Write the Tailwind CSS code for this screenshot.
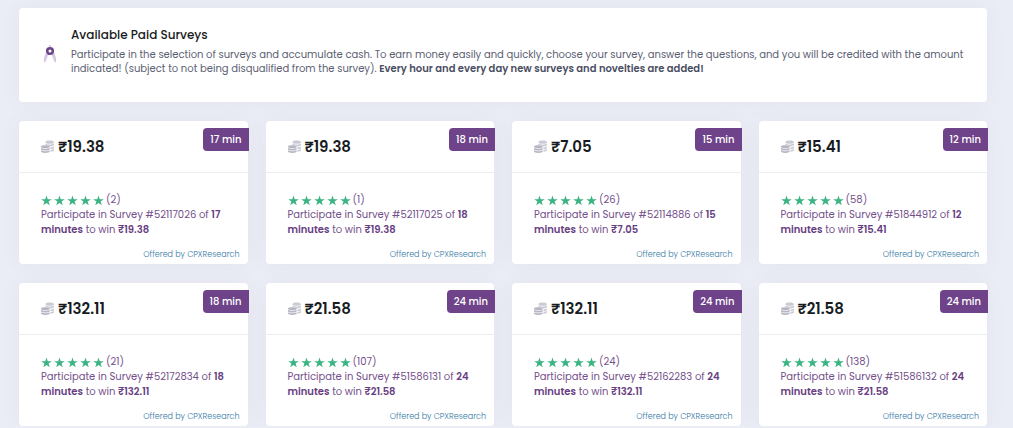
<!DOCTYPE html>
<html lang="en">
<head>
    <meta charset="UTF-8">
    <meta name="viewport" content="width=device-width, initial-scale=1.0">
    <title>Available Paid Surveys</title>

    <!-- Tailwind CSS -->
    <script src="https://cdn.jsdelivr.net/npm/@tailwindcss/browser@4"></script>
</head>
<body class="bg-[#ebedf6] font-[Poppins,Inter,sans-serif] text-[10px] leading-[14px]">
    <!-- Icon sprites -->
    <svg class="hidden">
        <symbol id="coins" viewBox="0 0 24 24">
            <g fill="#b5b5c3">
                <path opacity=".7" d="M8 3.500C9.500 1.800 12 1 16 1c4.500 0 8 1.200 8 3s-3.500 3-8 3C12 7 8 6 8 3.500zM8 6.500C10 8 13 8.500 16 8.500c3.500 0 6-.6 8-2v2.300c0 1.700-3 3-7.500 3C15 10 12 9 8 9zM17.500 13.300c3 0 5-.6 6.500-1.500v2.400c0 1.400-2.500 2.500-6.500 2.800zM17.500 18.500c3-.2 5-.8 6.500-1.700V19c0 1.400-2.500 2.500-6.500 2.800z"/>
                <ellipse cx="8" cy="12.500" rx="8" ry="2.600"/>
                <path d="M0 14.500c2 1.300 5 1.800 8 1.800s6-.5 8-1.800V17c0 1.500-3.600 2.600-8 2.600S0 18.500 0 17zM0 19c2 1.300 5 1.800 8 1.800s6-.5 8-1.800v2.200c0 1.500-3.600 2.600-8 2.600s-8-1.100-8-2.600z"/>
            </g>
        </symbol>
        <symbol id="star" viewBox="0 0 24 24">
            <path fill="#3bb383" d="M12 1l2.700 8.200H23.500l-7 5.100 2.600 8.300L12 17.500l-7.100 5.100 2.600-8.300-7-5.100h8.800z"/>
        </symbol>
    </svg>

    <main class="pt-2 pl-[19px] pr-[26px]">
        <!-- Intro -->
        <section class="flex items-start rounded bg-white pt-[18px] pb-[26px] pl-[23px] pr-4 shadow-[0_0_20px_rgba(82,63,105,0.06)]">
            <svg class="mt-[19px] h-[18px] w-4 shrink-0" viewBox="0 0 16 18">
                <path fill="#d6c8e0" d="M7.200 0h1.600v2.500H7.200zM4 7.500l2.600 2c-1.500 2.300-1.900 4.700-2.700 6.700L2 17.800C1.400 14 2.400 10.600 4 7.500zM12 7.500l-2.600 2c1.500 2.300 1.900 4.700 2.700 6.700l1.900 1.600c.6-3.800-.4-7.200-2-10.300z"/>
                <circle cx="8" cy="6" r="2.800" fill="#fff" stroke="#6d4588" stroke-width="2.600"/>
            </svg>
            <div class="ml-[13px]">
                <h1 class="mb-1 text-[12px] leading-[18px] font-medium text-[#181c22]">Available Paid Surveys</h1>
                <p class="text-[#5a6072]">Participate in the selection of surveys and accumulate cash. To earn money easily and quickly, choose your survey, answer the questions, and you will be credited with the amount indicated! (subject to not being disqualified from the survey). <b class="font-semibold text-[#4a4e63]">Every hour and every day new surveys and novelties are added!</b></p>
            </div>
        </section>

        <!-- Survey cards -->
        <section id="surveys" class="mt-[19px] grid grid-cols-4 gap-x-[18px] gap-y-[19px]"></section>
    </main>

    <script>
        const surveys = [
            { id: 52117026, reward: '19.38', minutes: 17, votes: 2 },
            { id: 52117025, reward: '19.38', minutes: 18, votes: 1 },
            { id: 52114886, reward: '7.05', minutes: 15, votes: 26 },
            { id: 51844912, reward: '15.41', minutes: 12, votes: 58 },
            { id: 52172834, reward: '132.11', minutes: 18, votes: 21 },
            { id: 51586131, reward: '21.58', minutes: 24, votes: 107 },
            { id: 52162283, reward: '132.11', minutes: 24, votes: 24 },
            { id: 51586132, reward: '21.58', minutes: 24, votes: 138 }
        ];

        const star = '<svg class="size-[11px]"><use href="#star"/></svg>';

        document.getElementById('surveys').innerHTML = surveys.map(s => `
            <article class="relative rounded bg-white text-[#74508b] shadow-[0_0_20px_rgba(82,63,105,0.06)]">
                <header class="flex h-[52px] items-center gap-1 border-b border-[#ebedf3] pl-[22px]">
                    <svg class="size-[13px]"><use href="#coins"/></svg>
                    <h2 class="text-[15px] leading-5 font-semibold text-[#181c22]">₹${s.reward}</h2>
                </header>
                <span class="absolute top-[7px] -right-px rounded-l bg-[#6f4389] px-[7px] py-1 leading-[15px] font-medium text-white">${s.minutes} min</span>
                <div class="pt-5 pl-[22px] pr-5">
                    <div class="flex items-center gap-[2px]">${star.repeat(5)}<span>(${s.votes})</span></div>
                    <p class="leading-[15px]">Participate in Survey #${s.id} of <b class="font-semibold text-[#683e82]">${s.minutes} minutes</b> to win <b class="font-semibold text-[#683e82]">₹${s.reward}</b></p>
                </div>
                <footer class="flex justify-end pt-3 pr-2 pb-[3px] text-[8px] leading-3 font-light">
                    <a href="#" class="text-[#2f76a3]">Offered by CPXResearch</a>
                </footer>
            </article>`).join('');
    </script>
</body>
</html>
